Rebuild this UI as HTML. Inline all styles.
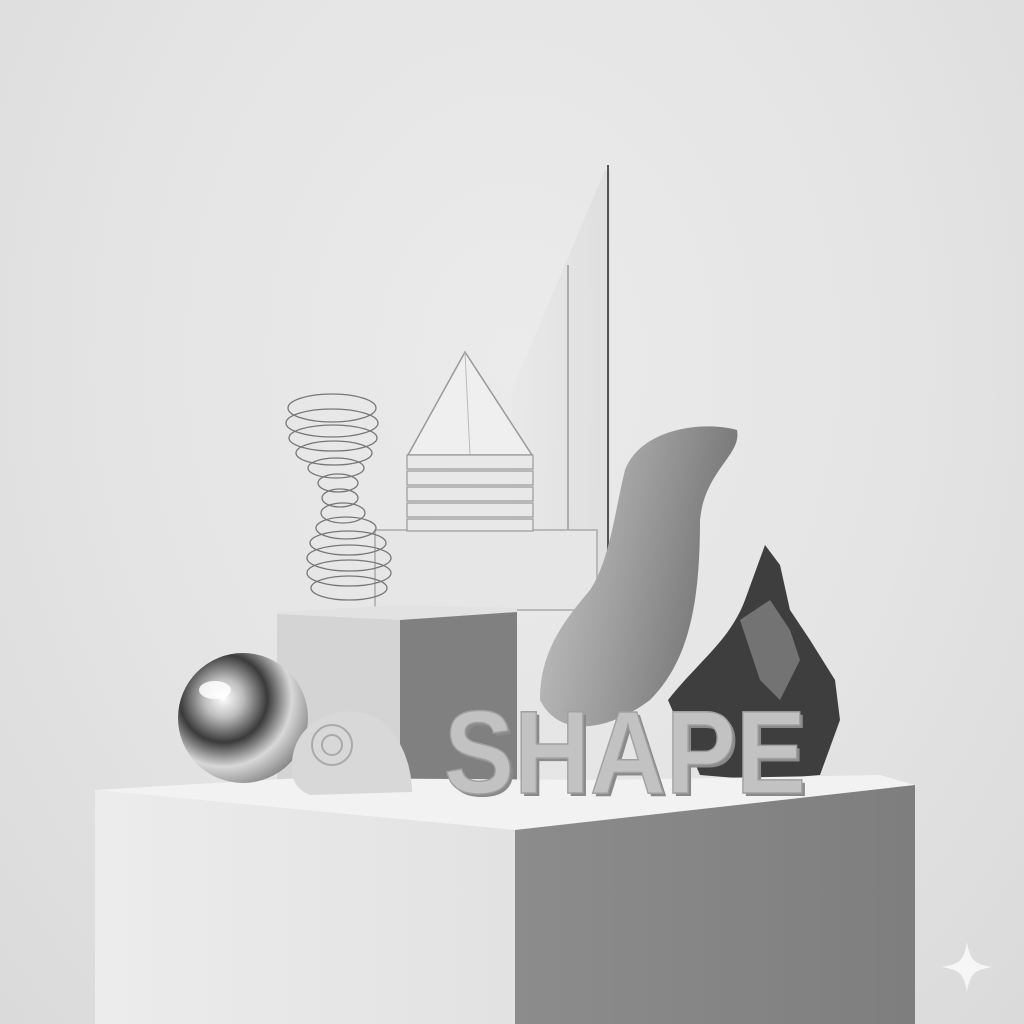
<!DOCTYPE html>
<html><head><meta charset="utf-8"><style>
html,body{margin:0;padding:0;width:1024px;height:1024px;overflow:hidden}
body{background:radial-gradient(ellipse at 50% 35%,#ebebeb 0%,#e4e4e4 55%,#dadada 100%)}
svg{position:absolute;left:0;top:0}
</style></head><body>
<svg width="1024" height="1024" viewBox="0 0 1024 1024">
<defs>
<radialGradient id="sph" cx="0.35" cy="0.35" r="0.75"><stop offset="0" stop-color="#fff"/><stop offset="0.2" stop-color="#bdbdbd"/><stop offset="0.45" stop-color="#3a3a3a"/><stop offset="0.7" stop-color="#d8d8d8"/><stop offset="1" stop-color="#777"/></radialGradient>
<linearGradient id="right" x1="0" x2="1"><stop offset="0" stop-color="#8c8c8c"/><stop offset="1" stop-color="#7e7e7e"/></linearGradient>
<linearGradient id="left" x1="0" x2="1"><stop offset="0" stop-color="#ececec"/><stop offset="1" stop-color="#e2e2e2"/></linearGradient>
<linearGradient id="wave" x1="0" x2="1" y1="0" y2="0.3"><stop offset="0" stop-color="#c8c8c8"/><stop offset="0.55" stop-color="#9c9c9c"/><stop offset="1" stop-color="#747474"/></linearGradient>
<linearGradient id="glass" x1="0" x2="1"><stop offset="0" stop-color="#e8e8e8"/><stop offset="1" stop-color="#dbdbdb"/></linearGradient>
</defs>
<polygon points="512,390 605,170 610,170 610,600 512,600" fill="url(#glass)" opacity="0.7"/>
<line x1="608" y1="165" x2="608" y2="600" stroke="#555" stroke-width="2"/>
<line x1="568" y1="265" x2="568" y2="600" stroke="#999" stroke-width="1.5"/>
<rect x="375" y="530" width="222" height="80" fill="#e6e6e6" stroke="#aaa" stroke-width="1.5"/>
<polygon points="465,352 408,455 532,455" fill="#efefef" stroke="#999" stroke-width="1.5"/>
<line x1="465" y1="352" x2="470" y2="455" stroke="#bbb"/>
<g fill="#e8e8e8" stroke="#999" stroke-width="1.2">
<rect x="407" y="455" width="126" height="14"/><rect x="407" y="471" width="126" height="14"/><rect x="407" y="487" width="126" height="14"/><rect x="407" y="503" width="126" height="14"/><rect x="407" y="519" width="126" height="12"/></g>
<g fill="none" stroke="#777" stroke-width="1.3">
<ellipse cx="332" cy="408" rx="44" ry="14"/><ellipse cx="332" cy="423" rx="46" ry="14"/><ellipse cx="333" cy="438" rx="44" ry="13"/><ellipse cx="334" cy="453" rx="38" ry="12"/><ellipse cx="336" cy="468" rx="28" ry="10"/><ellipse cx="338" cy="483" rx="20" ry="9"/><ellipse cx="340" cy="498" rx="18" ry="9"/><ellipse cx="343" cy="513" rx="22" ry="10"/><ellipse cx="346" cy="528" rx="30" ry="11"/><ellipse cx="348" cy="543" rx="38" ry="12"/><ellipse cx="349" cy="558" rx="42" ry="13"/><ellipse cx="349" cy="573" rx="42" ry="13"/><ellipse cx="349" cy="588" rx="38" ry="12"/></g>
<polygon points="277,612 400,605 517,608 517,615 400,620 277,614" fill="#e2e2e2"/>
<polygon points="277,614 400,620 400,785 277,780" fill="#d4d4d4"/>
<polygon points="400,620 517,612 517,782 400,785" fill="#808080"/>
<path d="M540,700 C540,650 565,620 590,590 C610,560 615,510 625,470 C640,430 700,420 737,430 C742,455 705,470 700,520 C700,600 690,660 650,700 C610,730 560,740 540,700 Z" fill="url(#wave)"/>
<path d="M668,700 C700,660 730,640 745,600 L765,545 L780,565 L790,610 L810,640 L835,680 L840,720 L820,775 L760,780 L700,775 Z" fill="#3e3e3e"/>
<path d="M740,620 L770,600 L790,630 L800,660 L780,700 L760,680 Z" fill="#8a8a8a" opacity="0.7"/>
<polygon points="95,790 300,778 600,780 880,775 915,785 515,830" fill="#f2f2f2"/>
<polygon points="95,790 515,830 515,1024 95,1024" fill="url(#left)"/>
<polygon points="515,830 915,785 915,1024 515,1024" fill="url(#right)"/>
<circle cx="243" cy="718" r="65" fill="url(#sph)"/>
<ellipse cx="215" cy="690" rx="16" ry="9" fill="#fff" opacity="0.85"/>
<path d="M292,770 C290,725 330,708 360,712 C395,718 412,760 412,792 L310,795 C298,790 292,782 292,770 Z" fill="#d8d8d8"/>
<circle cx="332" cy="745" r="20" fill="none" stroke="#aaa" stroke-width="2"/>
<circle cx="332" cy="745" r="10" fill="none" stroke="#aaa" stroke-width="2"/>
<text x="447" y="796" font-family="Liberation Sans, sans-serif" font-weight="bold" font-size="118" fill="#8a8a8a" textLength="362" lengthAdjust="spacingAndGlyphs">SHAPE</text>
<text x="444" y="793" font-family="Liberation Sans, sans-serif" font-weight="bold" font-size="118" fill="#c2c2c2" stroke="#a0a0a0" stroke-width="1.5" textLength="362" lengthAdjust="spacingAndGlyphs">SHAPE</text>
<path d="M967,942 C970,960 974,964 992,967 C974,970 970,974 967,992 C964,974 960,970 942,967 C960,964 964,960 967,942 Z" fill="#f6f6f6"/>
</svg>
</body></html>
